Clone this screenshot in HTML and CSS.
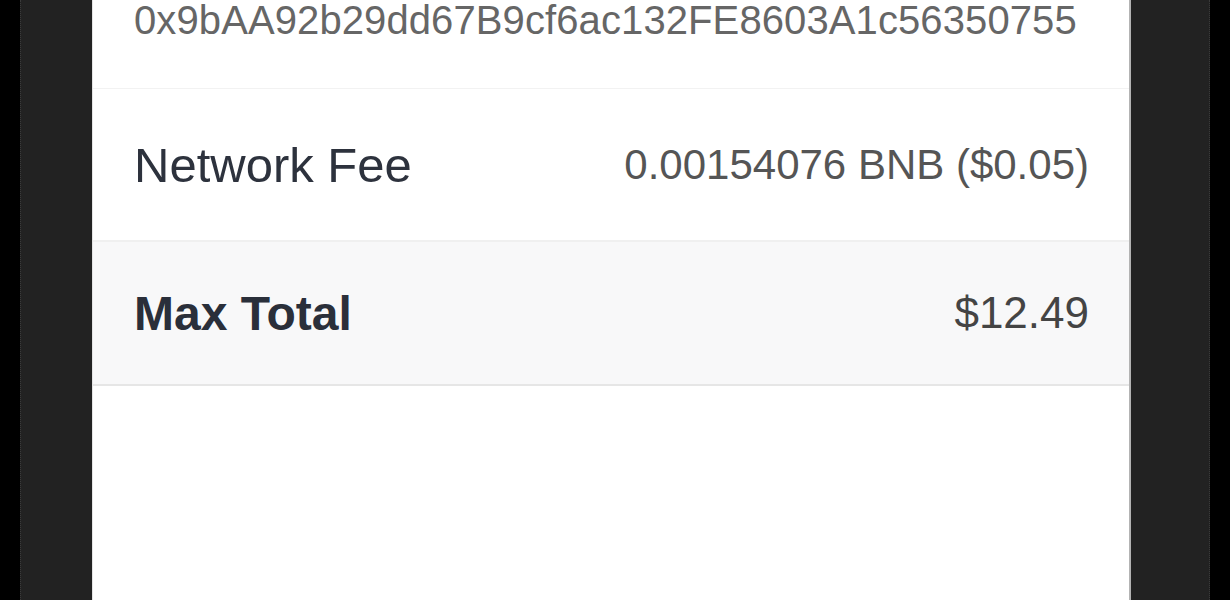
FILE: index.html
```html
<!DOCTYPE html>
<html lang="en">
<head>
  <meta charset="UTF-8">
  <meta name="viewport" content="width=device-width, initial-scale=1.0">
  <title>Confirm Transaction</title>
  <link rel="stylesheet" href="styles.css">
</head>
<body>

  <div class="device">
    <div class="screen">

      <!-- Recipient address (row continues above the fold) -->
      <div class="address-row">
        <span class="address">0x9bAA92b29dd67B9cf6ac132FE8603A1c56350755</span>
      </div>

      <div class="detail-row">
        <span class="label">Network Fee</span>
        <span class="value">0.00154076 BNB ($0.05)</span>
      </div>

      <div class="detail-row total">
        <span class="label">Max Total</span>
        <span class="value">$12.49</span>
      </div>

    </div>
  </div>

</body>
</html>
```

FILE: styles.css
```css
body {
  margin: 0;
  height: 600px;
  overflow: hidden;
  background: #000;
  font-family: 'Liberation Sans', Arial, sans-serif;
}

.device {
  margin: 0 20px;
  height: 600px;
  padding: 0 78px 0 71px;
  background: #222;
  border-left: 1px dotted #3a3a3a;
  border-right: 1px dotted #3a3a3a;
}

.screen {
  height: 100%;
  background: #fff;
  border-left: 1px solid #e4e4e4;
  border-right: 2px solid #b3b3b3;
}

.address-row {
  padding: 0 40px 48px 41px;
  border-bottom: 1px solid #f2f2f2;
}

.address {
  display: block;
  font-size: 40px;
  line-height: 40px;
  color: #666;
  letter-spacing: 0.1px;
}

.detail-row {
  display: flex;
  justify-content: space-between;
  align-items: center;
  height: 151px;
  padding: 0 40px 0 41px;
  border-bottom: 2px solid #f0f0f0;
}

.label {
  font-size: 49px;
  color: #2d323d;
}

.value {
  font-size: 42px;
  color: #555;
}

.detail-row.total {
  height: 142px;
  background: #f8f8f9;
  border-bottom: 2px solid #e6e6e6;
}

.detail-row.total .label {
  font-size: 48px;
  font-weight: bold;
  color: #2a2f3a;
}

.detail-row.total .value {
  font-size: 44px;
  color: #444;
}
```
